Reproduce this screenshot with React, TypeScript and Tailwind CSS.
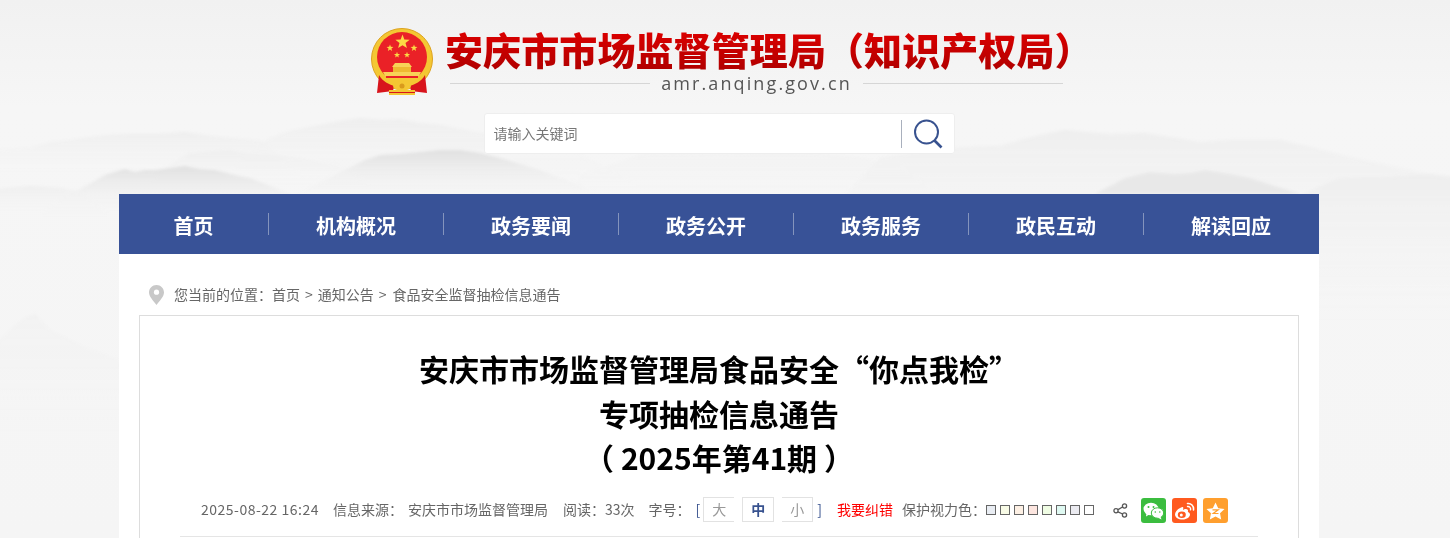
const cjk = "font-['Microsoft_YaHei','Noto_Sans_CJK_SC',sans-serif]";

const navItems = ["机构概况", "政务要闻", "政务公开", "政务服务", "政民互动", "解读回应"];
const eyeColors = ["bg-[#e9edf3]", "bg-[#f8fbe6]", "bg-[#fdf0e4]", "bg-[#fde6e0]", "bg-[#f0fde4]", "bg-[#dff9f2]", "bg-[#ebebf1]", "bg-white"];

// five pointed star for the emblem
function starPoints(cx: number, cy: number, r: number) {
    const pts: string[] = [];
    for (let i = 0; i < 10; i++) {
        const rad = i % 2 === 0 ? r : r * 0.42;
        const a = -Math.PI / 2 + (i * Math.PI) / 5;
        pts.push(`${(cx + rad * Math.cos(a)).toFixed(2)},${(cy + rad * Math.sin(a)).toFixed(2)}`);
    }
    return pts.join(" ");
}

function Mountains() {
    return (
        <svg className="absolute inset-0 z-0" width="1450" height="538" viewBox="0 0 1450 538">
            <defs>
                <filter id="b1" x="-10%" y="-10%" width="120%" height="120%">
                    <feGaussianBlur stdDeviation="1.5" />
                </filter>
                <linearGradient id="bg" x1="0" y1="0" x2="0" y2="1">
                    <stop offset="0" stopColor="#f1f1f1" />
                    <stop offset="0.2" stopColor="#f6f6f6" />
                    <stop offset="1" stopColor="#f5f5f5" />
                </linearGradient>
                <linearGradient id="fade1" x1="0" y1="0" x2="0" y2="1">
                    <stop offset="0" stopColor="#e0e0e0" />
                    <stop offset="1" stopColor="#f6f6f6" stopOpacity="0" />
                </linearGradient>
                <linearGradient id="fade2" x1="0" y1="0" x2="0" y2="1">
                    <stop offset="0" stopColor="#eeeeee" />
                    <stop offset="1" stopColor="#f6f6f6" stopOpacity="0" />
                </linearGradient>
            </defs>
            <rect width="1450" height="538" fill="url(#bg)" />
            <g filter="url(#b1)">
                <path d="M240 160 L270 138 L290 131 L310 127 L335 122 L360 118 L382 120 L400 119 L420 123 L440 125 L470 131 L500 136 L560 144 L640 185 L220 185 Z" fill="url(#fade2)" />
                <path d="M-10 150 L30 148 L50 142 L70 140 L90 137 L110 135 L130 134 L160 134 L185 132 L210 136 L230 138 L262 141 L300 175 L-10 175 Z" fill="url(#fade2)" />
                <path d="M160 170 L190 153 L215 151 L230 150 L250 154 L275 155 L300 158 L340 166 L370 185 L150 185 Z" fill="url(#fade2)" />
                <path d="M60 200 L82 188 L95 181 L105 175 L118 171 L125 169 L135 172 L145 170 L155 170 L170 168 L185 166 L200 169 L215 170 L235 175 L250 178 L270 186 L285 192 L320 215 L40 215 Z" fill="url(#fade1)" />
                <path d="M280 200 L300 192 L325 180 L345 170 L365 160 L380 155 L400 154 L420 152 L440 150 L460 150 L480 153 L500 158 L540 170 L600 194 L280 200 Z" fill="url(#fade1)" />
                <path d="M-10 190 L30 186 L60 188 L80 192 L110 215 L-10 215 Z" fill="url(#fade2)" />
                <path d="M580 175 L650 152 L720 154 L780 150 L860 158 L900 165 L940 194 L570 194 Z" fill="url(#fade2)" opacity="0.5" />
                <path d="M840 200 L880 158 L930 150 L970 147 L1000 146 L1020 140 L1045 134 L1065 130 L1085 132 L1110 134 L1145 133 L1175 138 L1200 142 L1230 140 L1280 140 L1310 147 L1340 155 L1400 168 L1460 182 L1460 250 L820 250 Z" fill="url(#fade2)" />
                <path d="M1095 194 L1125 178 L1150 172 L1175 174 L1190 173 L1205 170 L1230 174 L1250 178 L1275 186 L1300 194 Z" fill="#e8e8e8" />
                <path d="M1300 196 L1320 186 L1340 178 L1360 177 L1380 177 L1410 175 L1430 174 L1460 178 L1460 320 L1280 320 Z" fill="url(#fade2)" />
                <path d="M-10 350 L15 325 L25 318 L35 314 L50 330 L80 345 L119 360 L150 430 L-10 430 Z" fill="url(#fade2)" opacity="0.5" />
            </g>
        </svg>
    );
}

function Emblem() {
    return (
        <svg width="62" height="68" viewBox="0 0 62 68" className="shrink-0">
            <circle cx="31" cy="31" r="30.5" fill="#f4c733" />
            <circle cx="31" cy="31" r="30.5" fill="none" stroke="#dca220" strokeWidth="1" />
            <circle cx="31" cy="29" r="25" fill="#ea2127" />
            <polygon points={starPoints(31.5, 14, 7.5)} fill="#fcd945" />
            <polygon points={starPoints(19, 20, 3.6)} fill="#fcd945" />
            <polygon points={starPoints(43, 20, 3.6)} fill="#fcd945" />
            <polygon points={starPoints(26, 27, 3.2)} fill="#fcd945" />
            <polygon points={starPoints(36, 27, 3.2)} fill="#fcd945" />
            <path d="M24 35 H38 L41 39 H21 Z" fill="#f8d257" />
            <rect x="22" y="39" width="18" height="5" fill="#eeb931" />
            <path d="M12 44 H50 L48 48 H14 Z" fill="#f8d257" />
            <path d="M15 48 H47 V50 H15 Z" fill="#ea2127" />
            <path d="M12 50 H50 L46 54 H16 Z" fill="#f4c733" />
            <path d="M8 47 C12 54 18 56 23 58 L22 63 L6 65 Z" fill="#d8141c" />
            <path d="M54 47 C50 54 44 56 39 58 L40 63 L56 65 Z" fill="#d8141c" />
            <path d="M18 62 H44 V67 H18 Z" fill="#f4c733" />
            <path d="M18 64.5 H44" stroke="#d8141c" strokeWidth="1" />
            <ellipse cx="31" cy="58" rx="9" ry="4.5" fill="#f4c733" />
            <circle cx="31" cy="58" r="2.5" fill="#d99a1c" />
        </svg>
    );
}

function Pin() {
    return (
        <svg width="15" height="20" viewBox="0 0 15 20" className="shrink-0 mt-px">
            <path d="M7.5 0 C3.3 0 0 3.3 0 7.4 C0 11.5 4.6 16 7.5 20 C10.4 16 15 11.5 15 7.4 C15 3.3 11.7 0 7.5 0 Z" fill="#c8c8c8" />
            <circle cx="7.5" cy="7.2" r="2.6" fill="#fff" />
        </svg>
    );
}

export default function App() {
    return (
        <div className={`relative h-[538px] w-full overflow-hidden bg-[#f6f6f6] ${cjk}`}>
            <Mountains />

            <div className="relative z-10 w-[1438px]">
                {/* Header */}
                <header className="h-[194px] flex flex-col items-center">
                    <div className="flex pt-[28px] ml-[10px]">
                        <Emblem />
                        <div className="ml-[12px] w-[632px]">
                            <h1 className="h-[44px] -mt-[1px] text-[38px] leading-[44px] tracking-[0.1px] font-black whitespace-nowrap bg-gradient-to-b from-[#e00000] to-[#b00000] bg-clip-text text-transparent">
                                安庆市市场监督管理局（知识产权局）
                            </h1>
                            <div className="flex items-center mt-[2px] ml-[5px] w-[613px]">
                                <span className="flex-1 h-px bg-[#d6d6d6]"></span>
                                <span className="mx-[11px] font-['Open_Sans',sans-serif] text-[18px] leading-[20px] tracking-[2.1px] text-[#555]">amr.anqing.gov.cn</span>
                                <span className="flex-1 h-px bg-[#d6d6d6]"></span>
                            </div>
                        </div>
                    </div>

                    <div className="mt-[17px] w-[471px] h-[41px] flex items-center bg-white border border-[#eeeeee] rounded-[3px]">
                        <span className="flex-1 pl-[9px] text-[14px] text-[#777]">请输入关键词</span>
                        <span className="w-px h-[28px] bg-[#a9b0bd]"></span>
                        <svg width="30" height="30" viewBox="0 0 30 30" className="ml-[11px] mr-[11px]" fill="none" stroke="#38528f">
                            <circle cx="13.5" cy="13" r="11.5" strokeWidth="2" />
                            <path d="M21.5 21.5 L28.5 28.5" strokeWidth="2.6" />
                        </svg>
                    </div>
                </header>

                <main className="w-[1200px] mx-auto bg-white">
                    {/* Nav */}
                    <nav className="h-[60px] bg-[#385297] flex items-center">
                        <a className="w-[149px] pt-[3px] text-center text-[20px] font-bold text-white">首页</a>
                        {navItems.map((item) => (
                            <a key={item} className="w-[175px] h-[22px] pt-[3px] flex items-center justify-center border-l border-[#8494bd] text-[20px] font-bold text-white">
                                {item}
                            </a>
                        ))}
                    </nav>

                    {/* Breadcrumb */}
                    <div className="h-[61px] pl-[30px] pt-[30px] flex items-start gap-[10px]">
                        <Pin />
                        <p className="text-[14px] leading-[20px] text-[#666]">
                            您当前的位置：首页<span className="mx-[5px]">&gt;</span>通知公告<span className="ml-[5px] mr-[6px]">&gt;</span>食品安全监督抽检信息通告
                        </p>
                    </div>

                    {/* Article */}
                    <article className="mx-[20px] h-[300px] border border-[#dddddd] px-[40px]">
                        <h2 className="pt-[30px] text-center text-[30px] leading-[44.5px] font-bold text-black">
                            安庆市市场监督管理局食品安全“你点我检”<br />
                            专项抽检信息通告<br />
                            （ 2025年第41期 ）
                        </h2>

                        <div className="mt-[3px] h-[54px] border-b border-[#e5e5e5] pl-[21px] flex items-center text-[14px] text-[#666] whitespace-nowrap">
                            <span className="tracking-[0.5px] w-[118px]">2025-08-22 16:24</span>
                            <span className="ml-[14px]">信息来源：</span>
                            <span className="ml-[5px]">安庆市市场监督管理局</span>
                            <span className="ml-[15px]">阅读：33次</span>
                            <span className="ml-[14px]">字号：</span>
                            <span className="ml-[5px] text-[#38528f]">[</span>
                            <span className="ml-[3px] w-[31px] h-[25px] flex items-center justify-center border border-r-0 border-[#e2e2e2] text-[#999]">大</span>
                            <span className="ml-[8px] w-[32px] h-[25px] flex items-center justify-center border border-[#e2e2e2] text-[#38528f] font-bold">中</span>
                            <span className="ml-[8px] w-[31px] h-[25px] flex items-center justify-center border border-l-0 border-[#e2e2e2] text-[#999]">小</span>
                            <span className="ml-[4px] text-[#38528f]">]</span>
                            <span className="ml-[15px] text-[#ff0000]">我要纠错</span>
                            <span className="ml-[9px]">保护视力色：</span>
                            <span className="flex gap-[4px] mt-[2px]">
                                {eyeColors.map((c, i) => (
                                    <span key={i} className={`w-[10px] h-[10px] border border-[#666] ${c}`}></span>
                                ))}
                            </span>
                            <svg width="15" height="15" viewBox="0 0 15 15" className="ml-[19px] mt-[2px]" fill="none" stroke="#555" strokeWidth="1.3">
                                <circle cx="11.5" cy="3" r="2.1" />
                                <circle cx="3" cy="7.7" r="2.1" />
                                <circle cx="11.5" cy="12" r="2.1" />
                                <path d="M5 6.6 L9.6 4 M5 8.8 L9.6 11" />
                            </svg>
                            <span className="ml-[13px] mt-[3px] w-[25px] h-[25px] rounded-[3px] bg-[#3bbd3f] flex items-center justify-center">
                                <svg width="21" height="18" viewBox="0 0 21 18">
                                    <ellipse cx="8" cy="7" rx="7.5" ry="6.3" fill="#fff" />
                                    <path d="M3.5 11 L3 14.5 L7 12 Z" fill="#fff" />
                                    <ellipse cx="14.5" cy="11" rx="6.2" ry="5.2" fill="#fff" stroke="#3bbd3f" />
                                    <path d="M17.5 14.5 L18.5 17.5 L14.5 15.5 Z" fill="#fff" />
                                    <circle cx="5.5" cy="5" r="1" fill="#3bbd3f" />
                                    <circle cx="10.5" cy="5" r="1" fill="#3bbd3f" />
                                    <circle cx="12.3" cy="10" r="0.8" fill="#3bbd3f" />
                                    <circle cx="16.8" cy="10" r="0.8" fill="#3bbd3f" />
                                </svg>
                            </span>
                            <span className="ml-[6px] mt-[3px] w-[25px] h-[25px] rounded-[3px] bg-[#ff5a1f] flex items-center justify-center">
                                <svg width="21" height="18" viewBox="0 0 21 18" fill="none">
                                    <path d="M8.5 5 C4.5 6 1 9.5 1 12.5 C1 15.5 4.5 17.5 8.5 17.5 C13 17.5 16 15 16 12.5 C16 10.8 14.5 10.3 13.8 10 C14.5 8.2 13.5 7 12 7 C11 7 9.5 7.6 9 8 C9.4 6.2 9.5 4.8 8.5 5 Z" fill="#fff" />
                                    <ellipse cx="7.8" cy="12.8" rx="4" ry="3.2" fill="#ff5a1f" />
                                    <circle cx="7.3" cy="13" r="1.5" fill="#fff" />
                                    <path d="M13.5 1.5 C17 1 20 4 19.5 8" stroke="#fff" strokeWidth="1.6" strokeLinecap="round" />
                                    <path d="M13.5 4.5 C15.5 4.2 17 6 16.5 7.8" stroke="#fff" strokeWidth="1.4" strokeLinecap="round" />
                                </svg>
                            </span>
                            <span className="ml-[6px] mt-[3px] w-[25px] h-[25px] rounded-[3px] bg-[#ff9f2e] flex items-center justify-center">
                                <svg width="19" height="18" viewBox="0 0 19 18">
                                    <polygon points="9.5,0.5 12.2,6.2 18.5,7 14,11.3 15.2,17.5 9.5,14.5 3.8,17.5 5,11.3 0.5,7 6.8,6.2" fill="#fff" />
                                    <path d="M6.5 7.8 H12.2 L7.2 11.5 H12.5" stroke="#ff9f2e" strokeWidth="1.2" fill="none" />
                                </svg>
                            </span>
                        </div>
                    </article>
                </main>
            </div>
        </div>
    );
}
